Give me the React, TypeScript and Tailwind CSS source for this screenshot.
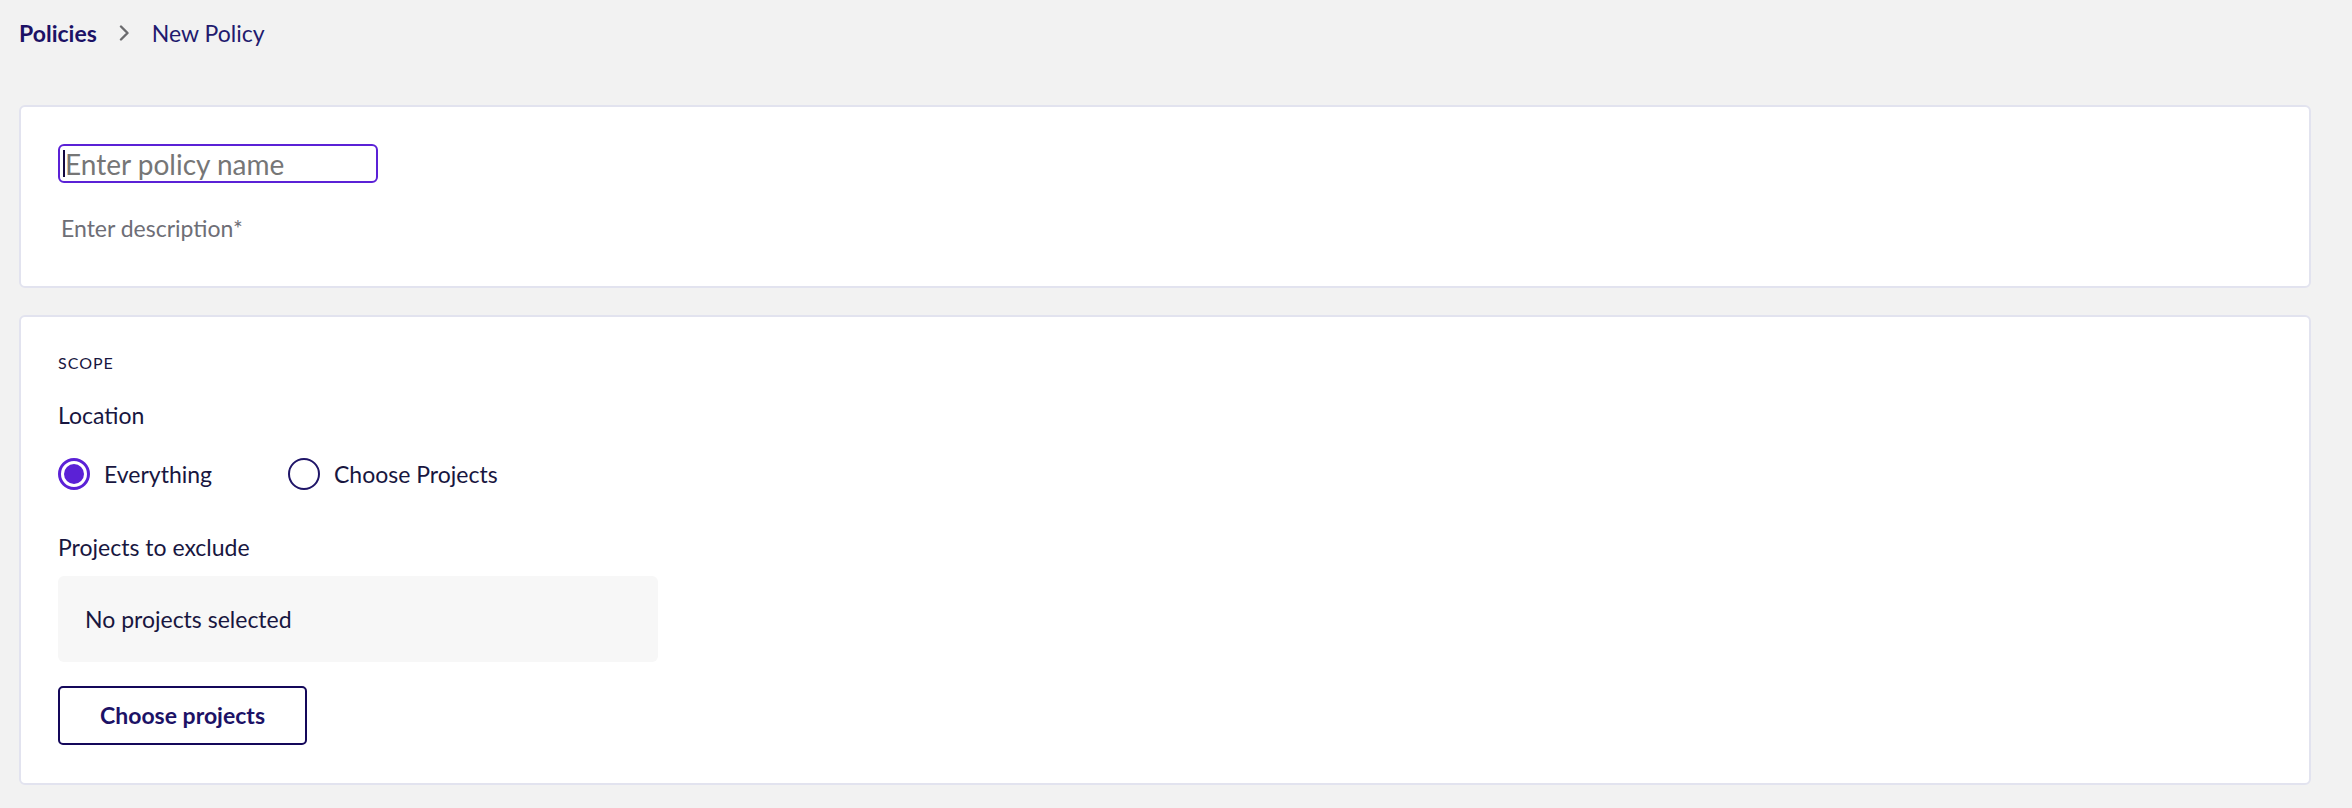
import { useState } from 'react';

const NAVY = 'text-[#1c1266]';

function Radio({ checked, label }: { checked: boolean; label: string }) {
  return (
    <div className="flex items-center gap-[14px]">
      {checked ? (
        <span className="flex h-[32px] w-[32px] items-center justify-center rounded-full border-[3px] border-[#5b21d6]">
          <span className="h-[20px] w-[20px] rounded-full bg-[#5b21d6]" />
        </span>
      ) : (
        <span className="h-[32px] w-[32px] rounded-full border-2 border-[#1f1568]" />
      )}
      <span className="text-[23px] leading-[28px] text-[#181640]">{label}</span>
    </div>
  );
}

export default function App() {
  const [location] = useState('everything');

  return (
    <div className="min-h-screen w-full bg-[#f2f2f2] pl-[19px] pr-[41px]" style={{ fontFamily: 'Lato, "Noto Sans", sans-serif' }}>
      {/* breadcrumb */}
      <div className="flex h-[66px] items-center text-[23px]">
        <span className={`font-bold ${NAVY}`}>Policies</span>
        <svg className="ml-[22px] mr-[22px]" width="11" height="16" viewBox="0 0 11 16" fill="none">
          <path d="M2 1.5L8.5 8L2 14.5" stroke="#6b6b6e" strokeWidth="2.4" strokeLinecap="round" strokeLinejoin="round" />
        </svg>
        <span className="text-[#221a6e]">New Policy</span>
      </div>

      {/* name / description */}
      <div className="mt-[39px] rounded-[6px] border-2 border-[#e2e3ef] bg-white pl-[37px] pt-[37px] pb-[44px]">
        <div className="relative h-[39px] w-[320px]">
          <input
            placeholder="Enter policy name"
            className="h-full w-full rounded-[6px] border-2 border-[#5b21d6] pl-[5px] text-[28px] leading-none text-[#1a1940] outline-none placeholder:text-[#767676]"
          />
          <span className="absolute left-[5px] top-[6px] h-[27px] w-[2px] bg-[#14083f]" />
        </div>
        <div className="mt-[31px] pl-[3px] text-[23px] leading-[28px] text-[#6e6e76]">Enter description*</div>
      </div>

      {/* scope */}
      <div className="mt-[27px] flex flex-col rounded-[6px] border-2 border-[#e2e3ef] bg-white pl-[37px] pt-[36px] pb-[38px]">
        <div className="text-[16px] leading-[20px] tracking-[1px] text-[#181640]">SCOPE</div>
        <div className="mt-[28px] text-[23px] leading-[28px] text-[#181640]">Location</div>
        <div className="mt-[29px] flex items-center">
          <div className="w-[230px]">
            <Radio checked={location === 'everything'} label="Everything" />
          </div>
          <Radio checked={location === 'projects'} label="Choose Projects" />
        </div>
        <div className="mt-[43px] text-[23px] leading-[28px] text-[#181640]">Projects to exclude</div>
        <div className="mt-[15px] flex h-[86px] w-[600px] items-center rounded-[6px] bg-[#f7f7f7] pl-[27px] text-[23px] text-[#181640]">
          No projects selected
        </div>
        <button
          type="button"
          className={`mt-[24px] h-[59px] w-[249px] rounded-[5px] border-2 border-[#14085a] bg-white text-[23px] font-bold ${NAVY}`}
        >
          Choose projects
        </button>
      </div>
    </div>
  );
}
